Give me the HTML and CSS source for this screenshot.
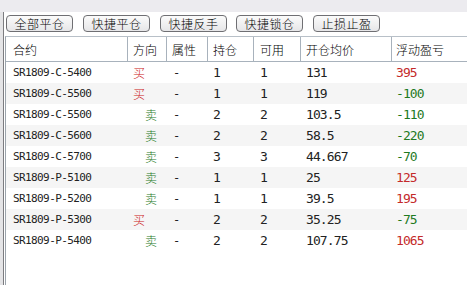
FILE: index.html
```html
<!DOCTYPE html>
<html>
<head>
<meta charset="utf-8">
<link rel="stylesheet" href="styles.css">
</head>
<body>
<div class="topband"></div>
<div class="main">
  <div class="leftbar"></div>
  <div class="content">
    <div class="toolbar">
      <button class="btn">全部平仓</button>
      <button class="btn">快捷平仓</button>
      <button class="btn">快捷反手</button>
      <button class="btn">快捷锁仓</button>
      <button class="btn">止损止盈</button>
    </div>
    <div class="grid">
      <div class="row head">
        <div class="c c1">合约</div>
        <div class="c c2">方向</div>
        <div class="c c3">属性</div>
        <div class="c c4">持仓</div>
        <div class="c c5">可用</div>
        <div class="c c6">开仓均价</div>
        <div class="c c7">浮动盈亏</div>
      </div>
      <div class="row">
        <div class="c c1 code">SR1809-C-5400</div>
        <div class="c c2 buy">买</div>
        <div class="c c3 dash">-</div>
        <div class="c c4 num">1</div>
        <div class="c c5 num">1</div>
        <div class="c c6 num">131</div>
        <div class="c c7 num up">395</div>
      </div>
      <div class="row">
        <div class="c c1 code">SR1809-C-5500</div>
        <div class="c c2 buy">买</div>
        <div class="c c3 dash">-</div>
        <div class="c c4 num">1</div>
        <div class="c c5 num">1</div>
        <div class="c c6 num">119</div>
        <div class="c c7 num down">-100</div>
      </div>
      <div class="row">
        <div class="c c1 code">SR1809-C-5500</div>
        <div class="c c2 sell">卖</div>
        <div class="c c3 dash">-</div>
        <div class="c c4 num">2</div>
        <div class="c c5 num">2</div>
        <div class="c c6 num">103.5</div>
        <div class="c c7 num down">-110</div>
      </div>
      <div class="row">
        <div class="c c1 code">SR1809-C-5600</div>
        <div class="c c2 sell">卖</div>
        <div class="c c3 dash">-</div>
        <div class="c c4 num">2</div>
        <div class="c c5 num">2</div>
        <div class="c c6 num">58.5</div>
        <div class="c c7 num down">-220</div>
      </div>
      <div class="row">
        <div class="c c1 code">SR1809-C-5700</div>
        <div class="c c2 sell">卖</div>
        <div class="c c3 dash">-</div>
        <div class="c c4 num">3</div>
        <div class="c c5 num">3</div>
        <div class="c c6 num">44.667</div>
        <div class="c c7 num down">-70</div>
      </div>
      <div class="row">
        <div class="c c1 code">SR1809-P-5100</div>
        <div class="c c2 sell">卖</div>
        <div class="c c3 dash">-</div>
        <div class="c c4 num">1</div>
        <div class="c c5 num">1</div>
        <div class="c c6 num">25</div>
        <div class="c c7 num up">125</div>
      </div>
      <div class="row">
        <div class="c c1 code">SR1809-P-5200</div>
        <div class="c c2 sell">卖</div>
        <div class="c c3 dash">-</div>
        <div class="c c4 num">1</div>
        <div class="c c5 num">1</div>
        <div class="c c6 num">39.5</div>
        <div class="c c7 num up">195</div>
      </div>
      <div class="row">
        <div class="c c1 code">SR1809-P-5300</div>
        <div class="c c2 buy">买</div>
        <div class="c c3 dash">-</div>
        <div class="c c4 num">2</div>
        <div class="c c5 num">2</div>
        <div class="c c6 num">35.25</div>
        <div class="c c7 num down">-75</div>
      </div>
      <div class="row">
        <div class="c c1 code">SR1809-P-5400</div>
        <div class="c c2 sell">卖</div>
        <div class="c c3 dash">-</div>
        <div class="c c4 num">2</div>
        <div class="c c5 num">2</div>
        <div class="c c6 num">107.75</div>
        <div class="c c7 num up">1065</div>
      </div>
    </div>
  </div>
</div>
</body>
</html>
```
FILE: styles.css
```css
html, body {
  margin: 0;
  padding: 0;
  background: #ffffff;
  overflow: hidden;
}
body {
  width: 467px;
  height: 285px;
  font-family: "Noto Sans CJK SC", "DejaVu Sans", sans-serif;
  font-size: 12px;
  font-weight: 300;
  color: #000;
}
.topband {
  height: 12px;
  background: #ecebef;
}
.main {
  display: flex;
  height: 273px;
}
.leftbar {
  width: 3px;
  flex: none;
  background: #e4e4e6;
  border-right: 1px solid #7c7c80;
  margin-right: 1px;
}
.content {
  flex: 1;
  min-width: 0;
  display: flex;
  flex-direction: column;
}
.toolbar {
  display: flex;
  padding: 3px 0 0 1px;
  height: 21px;
  gap: 10px;
}
.btn {
  box-sizing: border-box;
  width: 67px;
  height: 17px;
  padding: 0;
  margin: 0;
  border: 1px solid #6f6f73;
  border-radius: 4px;
  background: linear-gradient(#fbfbfb, #e6e6e8);
  font-family: "Noto Sans CJK SC", sans-serif;
  font-size: 12px;
  font-weight: 300;
  line-height: 14px;
  color: #000;
  letter-spacing: 0.5px;
}
.btn:nth-child(4) {
  margin-left: -1px;
}
.grid {
  border-left: 1px solid #9ca4ac;
  border-top: 1px solid #b8c0c8;
  flex: 1;
  width: 480px;
}
.row {
  display: flex;
  height: 21px;
  align-items: center;
}
.row:nth-child(odd) {
  background: #f5f5f5;
}
.row.head {
  height: 25px;
  background: #ffffff;
  border-bottom: 1px solid #a8b2bc;
  box-sizing: border-box;
  align-items: stretch;
}
.head .c {
  border-right: 1px solid #a8b2bc;
  display: flex;
  align-items: center;
  padding-top: 1px;
}
.c {
  box-sizing: border-box;
  flex: none;
  padding-left: 5px;
  white-space: nowrap;
}
.c1 { width: 122px; padding-left: 7px; }
.c2 { width: 39px; }
.c3 { width: 41px; }
.c4 { width: 46px; }
.c5 { width: 47px; padding-left: 6px; }
.c6 { width: 91px; }
.c7 { width: 80px; padding-left: 4px; }
.code {
  font-family: "DejaVu Sans Mono", monospace;
  font-size: 11px;
  font-weight: 400;
  letter-spacing: -0.6px;
  color: #222;
}
.num {
  font-family: "DejaVu Sans Mono", monospace;
  font-size: 13px;
  font-weight: 400;
  letter-spacing: -0.9px;
  color: #222;
}
.dash {
  font-family: "DejaVu Sans Mono", monospace;
  font-size: 12px;
  font-weight: 400;
  padding-left: 6px;
  color: #222;
}
.buy {
  color: #cc2222;
}
.sell {
  color: #1f7a1f;
  padding-left: 17px;
}
.up {
  color: #c42a2a;
}
.down {
  color: #1f7a1f;
}
```
